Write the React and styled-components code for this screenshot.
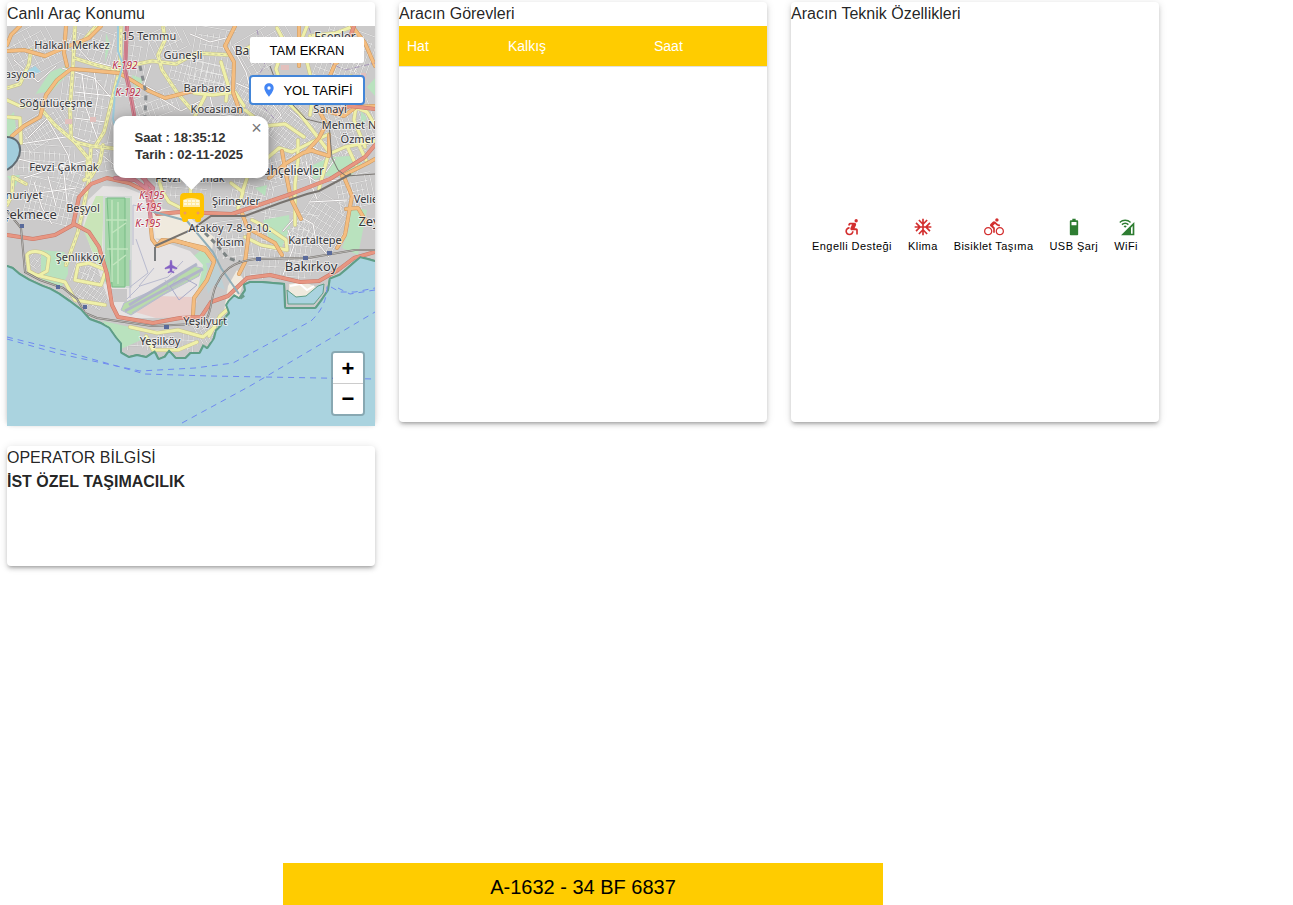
import React, { useState } from 'react';
import styled, { createGlobalStyle } from 'styled-components';
import {
  MdAccessibleForward,
  MdAcUnit,
  MdBattery5Bar,
  MdCellWifi,
  MdDirectionsBike,
  MdPlace,
} from 'react-icons/md';

const GlobalStyle = createGlobalStyle`
  *, *::before, *::after {
    box-sizing: border-box;
  }

  body {
    margin: 0;
    background-color: #fff;
    color: rgba(0, 0, 0, 0.87);
    font-family: 'Liberation Sans', Arial, sans-serif;
    font-size: 16px;
    line-height: 24px;
  }
`;

const Page = styled.div`
  display: flex;
  flex-direction: column;
  min-height: 100vh;
  max-width: 1159px;
  padding: 2px 0 0 7px;
`;

const Cards = styled.main`
  display: grid;
  grid-template-columns: repeat(3, minmax(0, 1fr));
  gap: 24px;
  margin-bottom: 24px;
`;

const Card = styled.section`
  display: flex;
  flex-direction: column;
  height: ${(props) => props.$height}px;
  border-radius: 4px;
  background-color: #fff;
  box-shadow: 0 3px 3px -2px rgba(0, 0, 0, 0.2), 0 3px 4px 0 rgba(0, 0, 0, 0.14),
    0 1px 8px 0 rgba(0, 0, 0, 0.12);
`;

const CardTitle = styled.h2`
  margin: 0;
  font-size: 16px;
  font-weight: 400;
  line-height: 24px;
`;

const OperatorName = styled.strong`
  font-weight: 700;
`;

const MapArea = styled.div`
  position: relative;
  flex: none;
  height: 400px;
  overflow: hidden;
  background-color: #aad3df;
`;

const MapDrawing = styled.svg`
  display: block;
  width: 100%;
  height: 100%;
`;

const MapActions = styled.div`
  position: absolute;
  top: 11px;
  right: 10px;
  display: flex;
  flex-direction: column;
  align-items: flex-end;
  gap: 12px;
`;

const MapButton = styled.button`
  display: flex;
  align-items: center;
  justify-content: center;
  gap: 6px;
  width: ${(props) => (props.$outlined ? 116 : 114)}px;
  height: ${(props) => (props.$outlined ? 30 : 26)}px;
  margin: ${(props) => (props.$outlined ? '0' : '0 1px')};
  padding: 0;
  border: ${(props) => (props.$outlined ? '2px solid #4285d8' : '0')};
  border-radius: ${(props) => (props.$outlined ? 4 : 2)}px;
  background-color: #fff;
  color: #000;
  font: 13px 'Liberation Sans', Arial, sans-serif;
  cursor: pointer;

  svg {
    color: #4285f4;
  }
`;

const Popup = styled.div`
  position: absolute;
  bottom: 248px;
  left: 50%;
  width: 155px;
  padding: 13px 24px 15px 20px;
  border-radius: 12px;
  background-color: #fff;
  color: #333;
  box-shadow: 0 3px 14px rgba(0, 0, 0, 0.4);
  font-size: 13px;
  font-weight: 700;
  line-height: 17px;
  text-align: center;
  transform: translateX(-50%);

  &::after {
    content: '';
    position: absolute;
    top: 100%;
    left: 50%;
    border: 12px solid transparent;
    border-top-color: #fff;
    border-bottom: 0;
    transform: translateX(-50%);
  }
`;

const PopupLine = styled.div`
  padding-right: ${(props) => (props.$short ? 18 : 0)}px;
  white-space: nowrap;
`;

const PopupClose = styled.button`
  position: absolute;
  top: 0;
  right: 0;
  width: 24px;
  height: 24px;
  padding: 0;
  border: 0;
  background: none;
  color: #757575;
  font: 18px/24px 'Liberation Sans', Arial, sans-serif;
  cursor: pointer;
`;

const ZoomControl = styled.div`
  position: absolute;
  right: 10px;
  bottom: 10px;
  border: 2px solid rgba(0, 0, 0, 0.2);
  border-radius: 4px;
  background-clip: padding-box;
`;

const ZoomButton = styled.button`
  display: block;
  width: 30px;
  height: ${(props) => (props.$divided ? 31 : 30)}px;
  padding: ${(props) => (props.$divided ? '2px 0 0' : '0')};
  border: 0;
  border-bottom: ${(props) => (props.$divided ? '1px solid #ccc' : '0')};
  border-radius: ${(props) => (props.$divided ? '2px 2px 0 0' : '0 0 2px 2px')};
  background-color: #fff;
  color: #000;
  font: bold 22px/28px 'Liberation Sans', Arial, sans-serif;
  cursor: pointer;
`;

const TaskTable = styled.table`
  width: 100%;
  border-collapse: collapse;
  table-layout: fixed;
`;

const TaskHead = styled.th`
  width: ${(props) => props.$width};
  height: 40px;
  padding: 0 8px;
  border-bottom: 1px solid #e0e0e0;
  background-color: #ffcc00;
  color: #fff;
  font-size: 14px;
  font-weight: 400;
  text-align: left;
`;

const Features = styled.ul`
  display: flex;
  flex: 1;
  align-items: center;
  justify-content: center;
  gap: 16px;
  margin: 0;
  padding: 24px 0 0;
  list-style: none;
`;

const Feature = styled.li`
  display: flex;
  flex-direction: column;
  align-items: center;
  color: #000;
  font-size: 11px;
  line-height: 18px;
  letter-spacing: 0.04em;
  white-space: nowrap;

  svg {
    color: ${(props) => (props.$available ? '#2e7d32' : '#d32f2f')};
  }
`;

const PlateBar = styled.footer`
  align-self: center;
  width: 100%;
  max-width: 600px;
  height: 42px;
  margin-top: auto;
  padding-top: 12px;
  background-color: #ffcc00;
  color: #000;
  font-size: 20px;
  line-height: 24px;
  text-align: center;
`;

const COAST =
  'M7 26H375V260L368 258L360 256L353 262L345 269L339 274L329 278L327 290L321 299L315 307H286L285 283L273 282L262 281L250 281L243 284L244 290L239 297L234 294L228 300L225 305L228 313L223 318L220 325L215 330L213 338L207 347L203 344L199 352L190 352L185 357L176 357L169 349L164 356L159 358L155 350L146 356L137 354L129 356L122 352V343L117 337L110 327L101 322L90 318L82 309L70 300L60 293L51 288L43 285L30 279L20 273L13 267L7 265Z';

// Small residential streets: [x, y, width, height, angle, step]
const BLOCKS = [
  [7, 28, 52, 45, -28, 6], [62, 70, 50, 40, 8, 6], [62, 28, 58, 38, 20, 7],
  [20, 112, 52, 32, -32, 4], [14, 145, 60, 34, 4, 5], [75, 105, 36, 38, 12, 6],
  [26, 182, 54, 42, 14, 5], [86, 144, 34, 28, -10, 6], [60, 165, 34, 34, 20, 6],
  [150, 26, 40, 28, -25, 6], [170, 62, 62, 30, 15, 5], [132, 92, 50, 26, -20, 5],
  [192, 28, 40, 56, 10, 6], [240, 28, 56, 40, -30, 6], [228, 85, 52, 50, 30, 4],
  [270, 100, 48, 55, 38, 4], [320, 28, 50, 60, 20, 5], [332, 95, 42, 56, -20, 6],
  [268, 150, 45, 35, -15, 5], [232, 178, 42, 34, 12, 5], [314, 140, 50, 34, 25, 6],
  [262, 212, 54, 54, 8, 5], [300, 198, 46, 52, 32, 5], [338, 175, 36, 36, -12, 5],
  [215, 220, 42, 40, -8, 6], [76, 275, 34, 35, 35, 4], [28, 255, 20, 18, 35, 4],
  [74, 258, 24, 28, 20, 5], [128, 331, 70, 21, 3, 5], [198, 320, 20, 24, -30, 4],
  [156, 180, 55, 20, 4, 5], [245, 258, 70, 22, 3, 6], [110, 35, 35, 55, 10, 7],
];

const YELLOW_ROADS = [
  'M75 26L73 66L70 108L71 136', 'M121 26L120 68L104 132L96 145', 'M74 58L96 65L122 72',
  'M96 26L84 40L73 50', 'M128 66L152 61L176 64L196 53L230 55', 'M163 26L165 40L158 55L162 70L178 94L192 110',
  'M40 108L55 125L75 142L91 146L119 149', 'M91 146L89 180L84 204L78 232L66 265', 'M70 136L88 158L87 178',
  'M103 145L100 162L91 177L84 180', 'M7 88L20 84L29 64L31 50', 'M26 184L13 177L12 195L7 205',
  'M7 100L22 107L28 104', 'M194 93L213 95L235 92L244 106', 'M266 82L300 114L329 152L319 189',
  'M245 110L265 126L285 124L304 137', 'M205 96L194 118L210 137L248 175L242 193',
  'M298 140L298 160L295 184L295 225', 'M265 160L279 148L292 152L312 142L329 134',
  'M337 113L350 105L367 112L375 125', 'M329 154L345 147L375 141', 'M348 148L356 165', 'M359 145L366 160',
  'M307 26L299 46L280 53L257 43L244 50', 'M317 53L310 36L336 33L354 26', 'M307 62L314 90L310 115',
  'M221 62L228 85L226 101', 'M351 76L358 93L354 120L365 147', 'M277 28L285 43L276 69L285 95',
  'M159 180L162 191L169 202L187 211', 'M191 180L190 208', 'M231 183L243 192L238 208',
  'M245 237L261 245L287 250L286 240L270 229L252 220', 'M78 265L75 280L101 285L106 270L89 263Z',
  'M27 255C30 250 41 250 49 257L47 271L38 276L29 271Z', 'M36 275L65 282L75 300L105 305',
  'M130 327L157 333L178 330L203 337L215 327', 'M146 336L153 350L178 350L197 342',
  'M209 336L220 316L228 309', 'M8 117L20 118L21 143',
];

const ORANGE_ROADS = [
  'M7 144L12 136L24 126L40 117L46 95L57 80L71 69L86 70L119 73L133 81L149 91L165 98L193 91',
  'M66 26L64 53L67 66', 'M7 51L24 50L45 56L59 50L89 38L101 26', 'M20 26L11 35L7 45',
  'M235 26L225 46L234 62L233 92L240 112', 'M299 26L299 66', 'M352 26L365 43L375 66',
  'M282 151L286 174L291 199L301 219', 'M307 151L319 138L326 124L320 112', 'M313 151L329 156L329 135',
  'M269 178L285 164L303 153L313 150', 'M344 177L352 196L345 235L337 248', 'M242 213L249 232L245 262L239 274',
  'M157 246L174 240L190 245L206 251L214 262L207 280L194 298L193 315', 'M150 219L152 239L157 246L162 240L175 241L205 248L214 260',
  'M342 176L368 163L375 159', 'M357 47L335 64L326 85', 'M327 111L344 116L356 107L375 106',
  'M248 226L253 231L275 243L282 255', 'M346 209L358 208L367 223',
];

const RAILS = [
  'M7 211L21 228L25 272L40 280L63 288L77 299L85 313L97 318L152 326L195 324C215 326 208 295 218 282C226 265 240 261 256 259L308 258L355 250H375',
  'M155 246L191 230L211 216L245 216L280 203L307 194L319 191L351 174',
];

const WHITE_ROADS = [
  'M42 110L68 155L72 174', 'M20 144L72 136L88 142', 'M14 158L57 168L93 159', 'M24 178L63 165L68 211',
  'M62 68L94 78L112 99L109 108', 'M77 47L90 61L111 66', 'M151 65L144 85L155 91', 'M190 34L210 42L230 37',
  'M160 98L181 111L206 98', 'M236 83L266 96L281 115L260 138', 'M290 110L318 134L309 152', 'M304 142L318 150',
  'M337 82L344 103L335 114', 'M359 63L354 72', 'M306 161L311 184L317 199', 'M309 202L347 200', 'M326 172L335 159',
  'M283 231L297 215L313 224L316 241L329 257', 'M283 275L294 246L288 230', 'M282 174L297 168L315 181L345 180',
  'M210 96L214 113L239 117', 'M184 196L181 204', 'M232 46L246 72L252 96',
  'M28 138L48 118L66 134', 'M82 74L86 108L98 140', 'M94 70L98 96L92 128', 'M75 92L112 96', 'M74 118L106 122',
  'M34 182L42 208L52 224', 'M30 194L76 188', 'M48 176L56 206', 'M96 150L118 168', 'M14 60L38 82L56 66',
];

const GREENS = [
  'M35 95L50 72L68 65L66 76L52 91L35 94Z', 'M7 118L14 112L16 128L7 140Z', 'M41 266L48 255L68 263L68 274L62 286L41 280Z',
  'M41 250L64 252L70 262L60 287L41 281Z',
  'M103 321L139 329L141 340L121 349L107 329Z', 'M263 220L289 215L290 228L281 249L270 242Z',
  'M333 157L350 156L362 163L350 177L325 176L319 189Z', 'M351 207L367 210L358 255L342 248L349 229Z',
  'M313 165L326 159L325 173L313 181Z', 'M7 176L20 175L15 187Z', 'M181 200L200 202L199 211L182 213Z',
  'M190 259L205 247L210 261L203 285L194 297L186 283Z', 'M361 111L367 118L361 127Z', 'M106 33L110 44L105 63Z',
  'M132 75L143 79L137 96Z', 'M367 87L375 78V96Z', 'M255 188L267 185L265 196Z',
];

const FERRIES = [
  'M7 339L60 354L140 371L195 368L233 363L311 321Q327 306 327 286',
  'M7 337L60 350L145 374L210 376L375 379', 'M182 423L250 386L375 312',
  'M331 287L340 292H355L375 288', 'M338 288L350 294L375 290',
];

// [text, x, y, font size]
const PLACES = [
  ['Halkalı Merkez', 72, 49, 11], ['15 Temmu', 149, 40, 11], ['Güneşli', 183, 59, 11],
  ['asyon', 20, 78, 11], ['Söğütlüçeşme', 56, 107, 11], ['Barbaros', 207, 92, 11],
  ['Kocasinan', 217, 113, 11], ['Ba', 242, 55, 12], ['Esenler', 335, 41, 12], ['Sanayi', 330, 113, 11],
  ['Mehmet N', 349, 129, 11], ['Özmer', 358, 143, 11], ['Fevzi Çakmak', 64, 171, 11],
  ['Fevzi Çakmak', 190, 182, 11], ['Bahçelievler', 290, 175, 12], ['nuriyet', 24, 199, 11],
  ['Çekmece', 29, 219, 13], ['Beşyol', 83, 212, 11], ['Şirinevler', 236, 205, 11],
  ['Velie', 366, 203, 11], ['Zey', 369, 226, 13], ['Ataköy 7-8-9-10.', 230, 232, 11],
  ['Kısım', 230, 246, 11], ['Kartaltepe', 315, 244, 11], ['Bakırköy', 311, 271, 13],
  ['Şenlikköy', 80, 261, 11], ['Yeşilyurt', 205, 325, 11], ['Yeşilköy', 160, 345, 11],
];

const HIGHWAY_SIGNS = [
  ['K-192', 125, 69], ['K-192', 128, 96], ['K-195', 152, 199], ['K-195', 149, 211], ['K-195', 148, 227],
];

const FEATURES = [
  { label: 'Engelli Desteği', Icon: MdAccessibleForward, available: false },
  { label: 'Klima', Icon: MdAcUnit, available: false },
  { label: 'Bisiklet Taşıma', Icon: MdDirectionsBike, available: false },
  { label: 'USB Şarj', Icon: MdBattery5Bar, available: true },
  { label: 'WiFi', Icon: MdCellWifi, available: true },
];

const blockPath = ([x, y, width, height, , step]) => {
  let d = '';
  for (let i = 0; i <= width; i += step) {
    const cut = (i * 7) % 11;
    d += `M${x + i} ${y + cut}V${y + height - ((i * 5) % 9)}`;
  }
  for (let j = 0; j <= height; j += step + 3) {
    d += `M${x + ((j * 3) % 8)} ${y + j}H${x + width - ((j * 7) % 13)}`;
  }
  return d;
};

const Roads = ({ paths, casing, fill, width }) => (
  <g fill="none" strokeLinejoin="round" strokeLinecap="round">
    <g stroke={casing} strokeWidth={width + 1}>
      {paths.map((d) => <path key={d} d={d} />)}
    </g>
    <g stroke={fill} strokeWidth={width}>
      {paths.map((d) => <path key={d} d={d} />)}
    </g>
  </g>
);

const CityMap = () => (
  <MapDrawing viewBox="7 26 368 400" preserveAspectRatio="xMidYMid slice" aria-hidden="true">
    <defs>
      <clipPath id="land">
        <path d={COAST} />
      </clipPath>
    </defs>
    <path d={COAST} fill="#cbcaca" stroke="#5f9e87" strokeWidth="4" strokeLinejoin="round" />
    <path d="M232 284L243 298" stroke="#6a9d8b" strokeWidth="5" />
    <g clipPath="url(#land)">
      <path d={COAST} fill="#cbcaca" />
      {/* blocks and streets */}
      <g fill="none" stroke="#b4b2b3" strokeWidth="1.5">
        {BLOCKS.map((block) => (
          <path
            key={block.join()}
            d={blockPath(block)}
            transform={`rotate(${block[4]} ${block[0] + block[2] / 2} ${block[1] + block[3] / 2})`}
          />
        ))}
      </g>
      <g fill="none" stroke="#ebebea" strokeWidth="0.8">
        {BLOCKS.map((block) => (
          <path
            key={block.join()}
            d={blockPath(block)}
            transform={`rotate(${block[4]} ${block[0] + block[2] / 2} ${block[1] + block[3] / 2})`}
          />
        ))}
      </g>
      <g fill="#b9e2be">
        {GREENS.map((d) => <path key={d} d={d} />)}
      </g>
      <g fill="#f0eade">
        <path d="M153 207L184 213L214 237L212 250L184 241L151 238Z" />
        <path d="M228 286L237 270L244 280L239 297L228 301L223 318Z" />
        <path d="M289 284L305 282L318 288L311 302H289Z" />
      </g>
      {/* harbour */}
      <path d="M287 290L296 297L306 296L318 286L324 284L323 293L314 304H288Z" fill="#aad3df" stroke="#5f9e87" />
      <path d="M290 286L300 284L307 290L314 286" fill="none" stroke="#fff" strokeWidth="2" />

      {/* airport */}
      <path d="M83 225L88 200L103 186L124 187L142 194L151 211L156 239L190 251L203 265L193 313L155 318L118 318L108 299Z" fill="#e6e3e3" />
      <path d="M90 209L96 196H103V223L101 272L83 229Z" fill="#c9e4b8" />
      <path d="M104 197H131V287H115L104 282Z" fill="#a9d6ae" stroke="#d3d9d6" strokeWidth="2" />
      <path d="M107 198H125V287H112Z" fill="#9ed4a4" stroke="#78bb85" />
      <path d="M112 200V282M118 202V284M106 220H127M107 249H128M112 233L126 223M113 265L126 255" fill="none" stroke="#c1e5be" strokeWidth="1.5" />
      <path d="M131 311L158 296L192 297L197 301L191 317L156 318Z" fill="#e9cecb" />
      <path d="M121 310L124 303L154 290L193 266L202 268L199 276L163 295L131 315Z" fill="#b9dbab" stroke="#b7bad0" />
      <path d="M125 311L203 269M129 305L197 264" fill="none" stroke="#b2b5c9" strokeWidth="3" />
      <path d="M132 313L190 278M124 302L140 286L168 277L183 261M130 298V260M139 286L154 268M168 290L180 274M165 280L170 290M133 245V205L151 209M136 239L148 273L130 287" fill="none" stroke="#b8bace" strokeWidth="1" />
      <path d="M170 286L184 278L197 285L179 300Z" fill="none" stroke="#a9aac7" />
      <path d="M111 289H127V302H114Z" fill="#c8c7c8" />
      <path d="M206 263L217 263L225 290L212 284ZM205 276L216 282L208 294Z" fill="#bdd0d5" />

      <Roads paths={WHITE_ROADS} casing="#bcb8b7" fill="#fff" width={1} />
      <Roads paths={YELLOW_ROADS} casing="#c3bd8f" fill="#eff0a9" width={3} />
      <g fill="none" stroke="#c9c9a3" strokeWidth="1" strokeDasharray="3 3">
        {YELLOW_ROADS.slice(0, 12).map((d) => <path key={d} d={d} />)}
      </g>
      <Roads paths={ORANGE_ROADS} casing="#c9965f" fill="#f4bd80" width={3} />
      <Roads
        paths={[
          'M7 235L33 239L55 235L73 225L79 197L91 184L107 178L129 183L149 193L157 214L181 212L232 214L291 194L330 179L365 157L375 145',
          'M74 224L89 232L99 247L107 274L112 305L118 317L153 323L180 318L201 317L211 302L228 296L247 278L270 275L300 282L319 281L338 270L354 258L375 252',
          'M354 26L350 37L338 46', 'M335 112L350 106L375 109',
        ]}
        casing="#c77767"
        fill="#e79682"
        width={3}
      />
      <Roads
        paths={['M127 26L125 70L130 92L136 126L143 165L147 190L151 221', 'M115 178L135 180L151 192', 'M141 176L153 188L149 206L157 213']}
        casing="#c16c79"
        fill="#dc8c99"
        width={3}
      />
      <path d="M126 26V73L138 136" fill="none" stroke="#ba6b7b" strokeWidth="1" />
      <path d="M118 26V51L123 65L115 92L113 119L120 143" fill="none" stroke="#9ccbdc" strokeWidth="2" />
      <path d="M140 66L146 93L145 117" fill="none" stroke="#85898c" strokeWidth="3" strokeDasharray="5 5" />
      <path d="M151 211L187 221L213 252L221 268L239 294" fill="none" stroke="#91aeb8" strokeWidth="2" />
      <path d="M205 233L216 244L228 258L240 262" fill="none" stroke="#7d8484" strokeWidth="3" strokeDasharray="5 4" />
      <path d="M7 137C25 138 24 160 7 170" fill="#a2cddc" stroke="#616c73" strokeWidth="2" />
      <path d="M27 71L35 66L41 72L32 74Z" fill="#a4d4e3" />
      <path d="M155 247L155 261" stroke="#777a7c" strokeWidth="2" />
      <g fill="none" stroke="#77736f" strokeWidth="2">
        {RAILS.map((d) => <path key={d} d={d} />)}
      </g>
      <path d={RAILS[0]} fill="none" stroke="#d6d4d1" strokeWidth="0.7" />
      <path
        d="M270 66L276 82L292 104L306 119L318 122L329 124L332 158L338 170L346 176L375 174"
        fill="none"
        stroke="#77736f"
      />
      <g fill="#596a9b">
        <path d="M56 285h4v4h-4zM83 305h4v4h-4zM164 325h5v4h-5zM256 257h5v4h-5zM303 256h5v4h-5zM327 251h5v4h-5zM20 224h4v4h-4z" />
      </g>
      <g fill="none" stroke="#9b86b0" strokeWidth="0.8" strokeDasharray="5 2 1 2">
        <path d="M257 30L265 65L248 92L277 121M309 28L319 58L345 70L375 63M243 123L253 135L268 156" />
      </g>
      <g fill="#e3c0bd">
        <path d="M281 65h8v5h-8zM361 73h5v6h-5zM90 117h6v5h-6zM65 119h7v5h-7zM315 99h6v5h-6z" />
      </g>
      <path
        d="M171 260Q172 260 172 263V265L177 268V269L172 268V271L174 272V273L171 272L168 273V272L170 271V268L165 269V268L170 265V263Q170 260 171 260Z"
        fill="#8461c4"
        stroke="#8461c4"
        strokeWidth="0.5"
      />
    </g>
    <g fill="none" stroke="#6f8af0" strokeWidth="1" strokeDasharray="6 5">
      {FERRIES.map((d) => <path key={d} d={d} />)}
    </g>
    <g
      fill="#36363a"
      stroke="#fff"
      strokeOpacity="0.6"
      strokeWidth="2"
      strokeLinejoin="round"
      paintOrder="stroke"
      textAnchor="middle"
      fontFamily="'Noto Sans', sans-serif"
    >
      {PLACES.map(([name, x, y, size]) => (
        <text key={`${name}${x}`} x={x} y={y} fontSize={size}>{name}</text>
      ))}
      <g fill="#b5213c" fontSize="10" fontStyle="italic" fontFamily="'Open Sans', 'Noto Sans', sans-serif">
        {HIGHWAY_SIGNS.map(([name, x, y]) => (
          <text key={`${x}${y}`} x={x} y={y}>{name}</text>
        ))}
      </g>
    </g>
    {/* bus marker */}
    <path
      fillRule="evenodd"
      fill="#ffc400"
      d="M184 193H200Q204 193 204 198V214Q204 217 201 218V220Q201 222 199 222H197Q195 222 195 219H188Q188 222 186 222H184Q182 222 182 219V218Q180 217 180 214V198Q180 193 184 193Z"
    />
    <path d="M183 200Q191 196 200 200V207H183Z" fill="#ffe9a1" />
    <path d="M184 201H199M184 204H199" stroke="#fff9dc" strokeWidth="2" strokeDasharray="3 1" />
    <circle cx="185" cy="213" r="1.5" fill="#ed9a62" />
    <circle cx="198" cy="213" r="1.5" fill="#ed9a62" />
  </MapDrawing>
);

const App = () => {
  const [popupOpen, setPopupOpen] = useState(true);

  return (
    <>
      <GlobalStyle />
      <Page>
        <Cards>
          <Card $height={420}>
            <CardTitle>Canlı Araç Konumu</CardTitle>
            <MapArea>
              <CityMap />
              {popupOpen && (
                <Popup>
                  <PopupLine $short>Saat : 18:35:12</PopupLine>
                  <PopupLine>Tarih : 02-11-2025</PopupLine>
                  <PopupClose aria-label="Kapat" onClick={() => setPopupOpen(false)}>×</PopupClose>
                </Popup>
              )}
              <MapActions>
                <MapButton type="button">TAM EKRAN</MapButton>
                <MapButton type="button" $outlined>
                  <MdPlace size={16} />
                  YOL TARİFİ
                </MapButton>
              </MapActions>
              <ZoomControl>
                <ZoomButton type="button" $divided>+</ZoomButton>
                <ZoomButton type="button">−</ZoomButton>
              </ZoomControl>
            </MapArea>
          </Card>
          <Card $height={420}>
            <CardTitle>Aracın Görevleri</CardTitle>
            <TaskTable>
              <thead>
                <tr>
                  <TaskHead $width="101px">Hat</TaskHead>
                  <TaskHead $width="146px">Kalkış</TaskHead>
                  <TaskHead>Saat</TaskHead>
                </tr>
              </thead>
            </TaskTable>
          </Card>
          <Card $height={420}>
            <CardTitle>Aracın Teknik Özellikleri</CardTitle>
            <Features>
              {FEATURES.map(({ label, Icon, available }) => (
                <Feature key={label} $available={available}>
                  <Icon size={20} />
                  {label}
                </Feature>
              ))}
            </Features>
          </Card>
          <Card $height={120}>
            <CardTitle>OPERATOR BİLGİSİ</CardTitle>
            <OperatorName>İST ÖZEL TAŞIMACILIK</OperatorName>
          </Card>
        </Cards>
        <PlateBar>A-1632 - 34 BF 6837</PlateBar>
      </Page>
    </>
  );
};

export default App;
